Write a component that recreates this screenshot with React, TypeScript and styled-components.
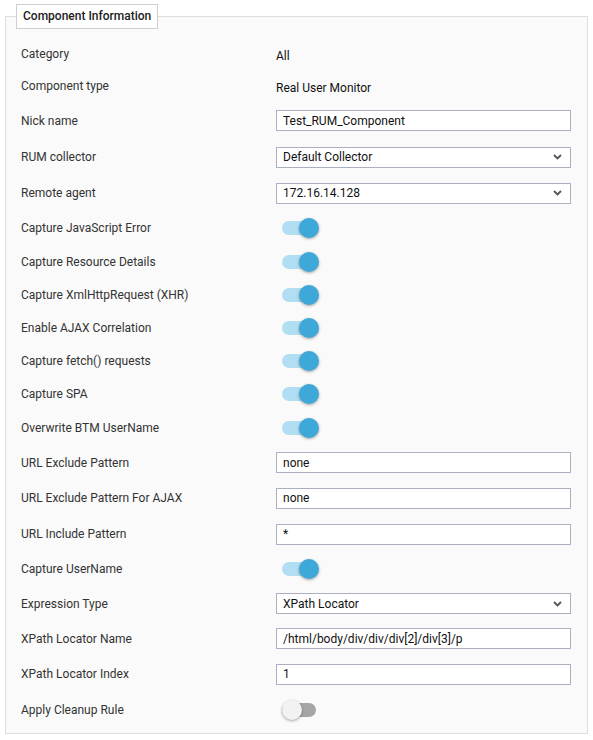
import React from "react";
import styled, { createGlobalStyle } from "styled-components";

const Global = createGlobalStyle`
  html, body { margin: 0; padding: 0; background: #ffffff; }
  body { font-family: Roboto, "Liberation Sans", Arial, sans-serif; font-size: 12px; color: #333; }
  * { box-sizing: border-box; }
`;

const Page = styled.div`
  width: 593px;
  height: 740px;
  padding: 4px 0 0 5px;
`;

const Fieldset = styled.fieldset`
  margin: 0;
  width: 583px;
  border: 1px solid #dedede;
  background: #fafafa;
  padding: 9px 16px 5px 15px;
  min-width: 0;
`;

const Legend = styled.legend`
  margin-left: -5px;
  padding: 0 6px;
  height: 25px;
  line-height: 23px;
  border: 1px solid #cfcfcf;
  background: #ffffff;
  font-weight: 500;
  font-size: 12px;
  color: #222;
`;

const Row = styled.div<{ $h: number }>`
  display: grid;
  grid-template-columns: 255px 1fr;
  align-items: center;
  height: ${(p) => p.$h}px;
`;

const Label = styled.div`
  color: #333;
  font-size: 12px;
  line-height: 14px;
`;

const TextValue = styled.div`
  margin-top: 4px;
  color: #111;
  font-size: 12px;
  line-height: 14px;
`;

const Input = styled.input`
  width: 295px;
  height: 21px;
  border: 1px solid #aab0bf;
  background: #ffffff;
  padding: 0 6px;
  font-family: Roboto, "Liberation Sans", Arial, sans-serif;
  font-size: 12px;
  color: #111;
  outline: none;
`;

const SelectBox = styled.div`
  width: 295px;
  height: 21px;
  border: 1px solid #aab0bf;
  background: #ffffff;
  padding: 0 8px 0 6px;
  display: flex;
  align-items: center;
  justify-content: space-between;
  color: #111;
  font-size: 12px;
`;

const Track = styled.div<{ $on: boolean }>`
  margin-left: 6px;
  width: 34px;
  height: 14px;
  border-radius: 7px;
  background: ${(p) => (p.$on ? "#b1def3" : "#a6a6a6")};
  display: flex;
  align-items: center;
  justify-content: ${(p) => (p.$on ? "flex-end" : "flex-start")};
`;

const Thumb = styled.div<{ $on: boolean }>`
  width: 20px;
  height: 20px;
  border-radius: 50%;
  flex: none;
  margin-right: ${(p) => (p.$on ? "-3px" : "0")};
  background: ${(p) => (p.$on ? "#3ea8d9" : "#f2f2f2")};
  box-shadow: 0 1px 3px rgba(0, 0, 0, 0.35);
`;

const Chevron = () => (
  <svg width="9" height="6" viewBox="0 0 9 6">
    <path d="M1 1 L4.5 4.5 L8 1" fill="none" stroke="#555" strokeWidth="1.8" />
  </svg>
);

type Item =
  | { label: string; kind: "text"; value: string; h: number }
  | { label: string; kind: "input"; value: string; h: number }
  | { label: string; kind: "select"; value: string; h: number }
  | { label: string; kind: "toggle"; on: boolean; h: number };

const items: Item[] = [
  { label: "Category", kind: "text", value: "All", h: 31 },
  { label: "Component type", kind: "text", value: "Real User Monitor", h: 33 },
  { label: "Nick name", kind: "input", value: "Test_RUM_Component", h: 37 },
  { label: "RUM collector", kind: "select", value: "Default Collector", h: 36 },
  { label: "Remote agent", kind: "select", value: "172.16.14.128", h: 36 },
  { label: "Capture JavaScript Error", kind: "toggle", on: true, h: 34 },
  { label: "Capture Resource Details", kind: "toggle", on: true, h: 33 },
  { label: "Capture XmlHttpRequest (XHR)", kind: "toggle", on: true, h: 33 },
  { label: "Enable AJAX Correlation", kind: "toggle", on: true, h: 33 },
  { label: "Capture fetch() requests", kind: "toggle", on: true, h: 33 },
  { label: "Capture SPA", kind: "toggle", on: true, h: 34 },
  { label: "Overwrite BTM UserName", kind: "toggle", on: true, h: 34 },
  { label: "URL Exclude Pattern", kind: "input", value: "none", h: 35 },
  { label: "URL Exclude Pattern For AJAX", kind: "input", value: "none", h: 36 },
  { label: "URL Include Pattern", kind: "input", value: "*", h: 36 },
  { label: "Capture UserName", kind: "toggle", on: true, h: 34 },
  { label: "Expression Type", kind: "select", value: "XPath Locator", h: 35 },
  { label: "XPath Locator Name", kind: "input", value: "/html/body/div/div/div[2]/div[3]/p", h: 35 },
  { label: "XPath Locator Index", kind: "input", value: "1", h: 36 },
  { label: "Apply Cleanup Rule", kind: "toggle", on: false, h: 36 },
];

const renderValue = (it: Item) => {
  switch (it.kind) {
    case "text":
      return <TextValue>{it.value}</TextValue>;
    case "input":
      return <Input defaultValue={it.value} />;
    case "select":
      return (
        <SelectBox>
          <span>{it.value}</span>
          <Chevron />
        </SelectBox>
      );
    case "toggle":
      return (
        <Track $on={it.on}>
          <Thumb $on={it.on} />
        </Track>
      );
  }
};

export default function App() {
  return (
    <>
      <Global />
      <Page>
        <Fieldset>
          <Legend>Component Information</Legend>
          {items.map((it) => (
            <Row key={it.label} $h={it.h}>
              <Label>{it.label}</Label>
              <div>{renderValue(it)}</div>
            </Row>
          ))}
        </Fieldset>
      </Page>
    </>
  );
}
